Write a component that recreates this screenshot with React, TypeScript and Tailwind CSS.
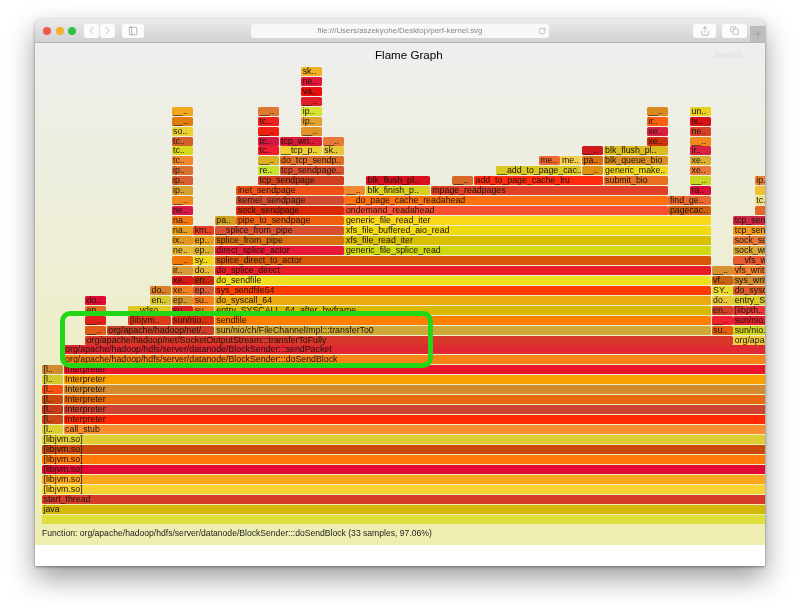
import { ChevronLeft, ChevronRight, PanelLeft, RotateCw, Share, Copy, Plus } from "lucide-react";

type F = [number, number, number, string, string?];

const FRAMES: F[] = [
  [0, 0, 34, "#dede3c"], [1, 0, 34, "#d4b808", "java"], [2, 0, 34, "#d63c2a", "start_thread"],
  [3, 0, 34, "#fad232", "[libjvm.so]"], [4, 0, 34, "#fca61e", "[libjvm.so]"], [5, 0, 34, "#e00a35", "[libjvm.so]"],
  [6, 0, 34, "#ff7a08", "[libjvm.so]"], [7, 0, 34, "#c94a0a", "[libjvm.so]"], [8, 0, 34, "#dfce32", "[libjvm.so]"],
  [9, 0, 1, "#dfce32", "[l.."], [9, 1, 33, "#f88c2e", "call_stub"],
  [10, 0, 1, "#c8481a", "[l.."], [10, 1, 33, "#ff2a05", "Interpreter"],
  [11, 0, 1, "#c4381c", "[l.."], [11, 1, 33, "#ce4232", "Interpreter"],
  [12, 0, 1, "#c94a10", "[l.."], [12, 1, 33, "#e8690e", "Interpreter"],
  [13, 0, 1, "#f85010", "[l.."], [13, 1, 33, "#d48a2e", "Interpreter"],
  [14, 0, 1, "#d4c830", "[l.."], [14, 1, 33, "#f8a000", "Interpreter"],
  [15, 0, 1, "#d08a30", "[l.."], [15, 1, 33, "#ea1528", "Interpreter"],
  [16, 1, 33, "#f88418", "org/apache/hadoop/hdfs/server/datanode/BlockSender:::doSendBlock"],
  [17, 1, 33, "#e02832", "org/apache/hadoop/hdfs/server/datanode/BlockSender:::sendPacket"],
  [18, 2, 30, "#d8382a", "org/apache/hadoop/net/SocketOutputStream:::transferToFully"], [18, 32, 2, "#f0cc40", "org/apa"],
  [19, 2, 1, "#e05a18", "__.."], [19, 3, 5, "#c8402a", "org/apache/hadoop/net/.."], [19, 8, 23, "#d0a838", "sun/nio/ch/FileChannelImpl:::transferTo0"], [19, 31, 1, "#e06010", "su.."], [19, 32, 2, "#d0d420", "sun/nio."],
  [20, 2, 1, "#e0201c", "__.."], [20, 4, 2, "#e03a1a", "[libjvm.."], [20, 6, 2, "#d83010", "sun/nio.."], [20, 8, 23, "#ff8000", "sendfile"], [20, 31, 1, "#f02030", "__.."], [20, 32, 2, "#e42030", "sun/nio."],
  [21, 2, 1, "#e07020", "en.."], [21, 4, 2, "#dfc820", "__vdso"], [21, 6, 1, "#e02020", "su.."], [21, 7, 1, "#f08020", "su.."], [21, 8, 23, "#d8b800", "entry_SYSCALL_64_after_hwframe"], [21, 31, 1, "#d0402c", "en.."], [21, 32, 2, "#e83838", "[libpth.."],
  [22, 2, 1, "#e00a35", "do.."], [22, 5, 1, "#d8c830", "en.."], [22, 6, 1, "#d89830", "ep.."], [22, 7, 1, "#f88020", "su.."], [22, 8, 23, "#ecaa10", "do_syscall_64"], [22, 31, 1, "#e8c83a", "do.."], [22, 32, 2, "#d8cc28", "entry_S"],
  [23, 5, 1, "#d88028", "do.."], [23, 6, 1, "#f08020", "xe.."], [23, 7, 1, "#d85838", "ep.."], [23, 8, 23, "#ff3c00", "sys_sendfile64"], [23, 31, 1, "#e8dc30", "SY.."], [23, 32, 2, "#d86028", "do_sysc"],
  [24, 6, 1, "#d81818", "xe.."], [24, 7, 1, "#c82808", "en.."], [24, 8, 23, "#f0e020", "do_sendfile"], [24, 31, 1, "#c86410", "vf.."], [24, 32, 2, "#d08a30", "sys_writ"],
  [25, 6, 1, "#d89838", "ir.."], [25, 7, 1, "#e8b838", "do.."], [25, 8, 23, "#e81c28", "do_splice_direct"], [25, 31, 1, "#d89030", "__.."], [25, 32, 2, "#f08030", "vfs_writ"],
  [26, 6, 1, "#f07808", "__.."], [26, 7, 1, "#f0d820", "sy.."], [26, 8, 23, "#d85808", "splice_direct_to_actor"], [26, 32, 2, "#e85a30", "__vfs_w"],
  [27, 6, 1, "#e8b838", "ne.."], [27, 7, 1, "#d8b030", "ep.."], [27, 8, 6, "#e81838", "direct_splice_actor"], [27, 14, 17, "#d0d810", "generic_file_splice_read"], [27, 32, 2, "#d8a838", "sock_wr"],
  [28, 6, 1, "#e09820", "ix.."], [28, 7, 1, "#e8a020", "ep.."], [28, 8, 6, "#d87010", "splice_from_pipe"], [28, 14, 17, "#d8c000", "xfs_file_read_iter"], [28, 32, 2, "#e87838", "sock_se"],
  [29, 6, 1, "#e8a020", "na.."], [29, 7, 1, "#e84028", "km.."], [29, 8, 6, "#d85030", "__splice_from_pipe"], [29, 14, 17, "#f0dc10", "xfs_file_buffered_aio_read"], [29, 32, 2, "#f09a20", "tcp_sen"],
  [30, 6, 1, "#f07810", "na.."], [30, 8, 1, "#d0a020", "pa.."], [30, 9, 5, "#f06010", "pipe_to_sendpage"], [30, 14, 17, "#fad818", "generic_file_read_iter"], [30, 32, 2, "#d02848", "tcp_sen"],
  [31, 6, 1, "#d81848", "ne.."], [31, 9, 5, "#d82808", "sock_sendpage"], [31, 14, 15, "#f85030", "ondemand_readahead"], [31, 29, 2, "#d06010", "pagecac.."], [31, 33, 1, "#e06a28"],
  [32, 6, 1, "#f08820", "__.."], [32, 9, 5, "#d04a30", "kernel_sendpage"], [32, 14, 15, "#fc7010", "__do_page_cache_readahead"], [32, 29, 2, "#e86a30", "find_ge.."], [32, 33, 1, "#f0e080", "tc."],
  [33, 6, 1, "#d8a030", "ip.."], [33, 9, 5, "#f05018", "inet_sendpage"], [33, 14, 1, "#f08830", "__.."], [33, 15, 3, "#d8d020", "blk_finish_p.."], [33, 18, 11, "#e04028", "mpage_readpages"], [33, 30, 1, "#d81038", "ra.."], [33, 33, 1, "#f0c030"],
  [34, 6, 1, "#d86030", "ip.."], [34, 10, 4, "#d04020", "tcp_sendpage"], [34, 15, 3, "#d81020", "blk_flush_pl.."], [34, 19, 1, "#d86828", "__.."], [34, 20, 6, "#ff2a10", "add_to_page_cache_lru"], [34, 26, 3, "#e87020", "submit_bio"], [34, 30, 1, "#c8d820", "__.."], [34, 33, 1, "#e88030", "ip."],
  [35, 6, 1, "#d87030", "ip.."], [35, 10, 1, "#c8e030", "re.."], [35, 11, 3, "#d85030", "tcp_sendpage.."], [35, 21, 4, "#d8c820", "__add_to_page_cac.."], [35, 25, 1, "#e09010", "__.."], [35, 26, 3, "#f0d820", "generic_make.."], [35, 30, 1, "#e87838", "xe.."],
  [36, 6, 1, "#f08830", "tc.."], [36, 10, 1, "#d8b020", "__.."], [36, 11, 3, "#e07028", "do_tcp_sendp.."], [36, 23, 1, "#f06830", "me.."], [36, 24, 1, "#f8d050", "me.."], [36, 25, 1, "#d87010", "pa.."], [36, 26, 3, "#d89020", "blk_queue_bio"], [36, 30, 1, "#d8b030", "xe.."],
  [37, 6, 1, "#d8d820", "tc.."], [37, 10, 1, "#f01c30", "tc.."], [37, 11, 2, "#f0d030", "__tcp_p.."], [37, 13, 1, "#e8c838", "sk.."], [37, 25, 1, "#d01820", "__.."], [37, 26, 3, "#d8bc20", "blk_flush_pl.."], [37, 30, 1, "#d82040", "ir.."],
  [38, 6, 1, "#d0602c", "tc.."], [38, 10, 1, "#d01840", "tc.."], [38, 11, 2, "#d81838", "tcp_wri.."], [38, 13, 1, "#e87838", "__.."], [38, 28, 1, "#d03010", "xe.."], [38, 30, 1, "#f08a20", "__.."],
  [39, 6, 1, "#e8d030", "so.."], [39, 10, 1, "#f02010", "__.."], [39, 12, 1, "#e09428", "__.."], [39, 28, 1, "#d82040", "xe.."], [39, 30, 1, "#d84028", "ne.."],
  [40, 6, 1, "#e07c10", "__.."], [40, 10, 1, "#f02020", "tc.."], [40, 12, 1, "#e0a030", "ip.."], [40, 28, 1, "#f86010", "ir.."], [40, 30, 1, "#d81018", "ix.."],
  [41, 6, 1, "#f0a820", "__.."], [41, 10, 1, "#e07830", "__.."], [41, 12, 1, "#d8e030", "ip.."], [41, 28, 1, "#d88a20", "__.."], [41, 30, 1, "#e8d020", "un.."],
  [42, 12, 1, "#e02028", "__.."], [43, 12, 1, "#e81010", "va.."], [44, 12, 1, "#e01838", "ne.."], [45, 12, 1, "#f0b020", "sk.."],
];

function Frame({ f }: { f: F }) {
  const [k, start, width, color, label] = f;
  return (
    <div
      className="absolute h-[9px] rounded-[1.5px] overflow-hidden whitespace-nowrap pl-[1.5px] text-[8.8px] leading-[9px] text-[#1a1208]"
      style={{ left: 7 + start * 21.6, top: 471.6 - k * 9.95, width: width * 21.6 - 0.6, backgroundColor: color }}
    >
      {label}
    </div>
  );
}

function Btn({ className, children }: { className: string; children: React.ReactNode }) {
  return <div className={`h-[14px] bg-[#fbfbfb] rounded-[3px] flex items-center justify-center text-[#8a8a8a] ${className}`}>{children}</div>;
}

export default function App() {
  return (
    <div className="w-[800px] h-[616px] bg-white overflow-hidden pt-[19px] pl-[35px]" style={{ fontFamily: '"Liberation Sans", Arial, sans-serif' }}>
      <div className="w-[730px] h-[547px] flex flex-col rounded-t-[5px] bg-white shadow-[0_1px_3px_rgba(0,0,0,0.4),0_12px_28px_rgba(0,0,0,0.4)] overflow-hidden blur-[0.35px]">
        <div className="h-[24px] shrink-0 flex items-center pl-[8px] bg-gradient-to-b from-[#ebebeb] to-[#d2d2d2] border-b border-[#b4b4b4] relative">
          <div className="flex gap-[4.5px]">
            <span className="w-[8px] h-[8px] rounded-full bg-[#f0584f]" />
            <span className="w-[8px] h-[8px] rounded-full bg-[#f5b030]" />
            <span className="w-[8px] h-[8px] rounded-full bg-[#2dc240]" />
          </div>
          <div className="flex gap-[1px] ml-[8px]">
            <Btn className="w-[15px]"><ChevronLeft size={13} strokeWidth={1} /></Btn>
            <Btn className="w-[15px]"><ChevronRight size={13} strokeWidth={1} /></Btn>
          </div>
          <Btn className="w-[22px] ml-[7px]"><PanelLeft size={10} strokeWidth={1} className="text-[#555]" /></Btn>
          <div className="w-[298px] h-[14px] ml-[107px] bg-[#f8f8f8] rounded-[3px] flex items-center relative">
            <span className="w-full text-center text-[7.9px] text-[#888] blur-[0.35px]">file:///Users/aszekyohe/Desktop/perf-kernel.svg</span>
            <RotateCw size={8} strokeWidth={1} className="absolute right-[3px] text-[#666]" />
          </div>
          <Btn className="w-[23px] ml-[144px]"><Share size={10} strokeWidth={1} className="text-[#666]" /></Btn>
          <Btn className="w-[25px] ml-[6px]"><Copy size={9} strokeWidth={1} className="text-[#666]" /></Btn>
          <div className="absolute right-0 bottom-0 w-[15px] h-[16px] bg-[#bdbdbd] flex items-center justify-center text-[#7a7a7a]"><Plus size={10} strokeWidth={1} /></div>
        </div>
        <div className="flex-1 flex flex-col bg-white">
          <div className="relative h-[502px] bg-gradient-to-b from-[#eeeeee] to-[#eeeeb0] overflow-hidden">
            <div className="absolute top-[5px] left-[340px] text-[11.6px] leading-[14px] text-black">Flame Graph</div>
            <div className="absolute top-[7px] left-[679px] text-[9px] leading-[10px] text-[#dcdcdc]">Search</div>
            {FRAMES.map((f, i) => <Frame key={i} f={f} />)}
            <div className="absolute left-[7px] top-[484px] text-[8.6px] leading-[12px] whitespace-nowrap text-[#222]">
              Function: org/apache/hadoop/hdfs/server/datanode/BlockSender:::doSendBlock (33 samples, 97.06%)
            </div>
            <div className="absolute left-[25px] top-[268px] w-[373px] h-[57px] rounded-[10px] border-[5px] border-[#22d816]" />
          </div>
        </div>
      </div>
    </div>
  );
}
